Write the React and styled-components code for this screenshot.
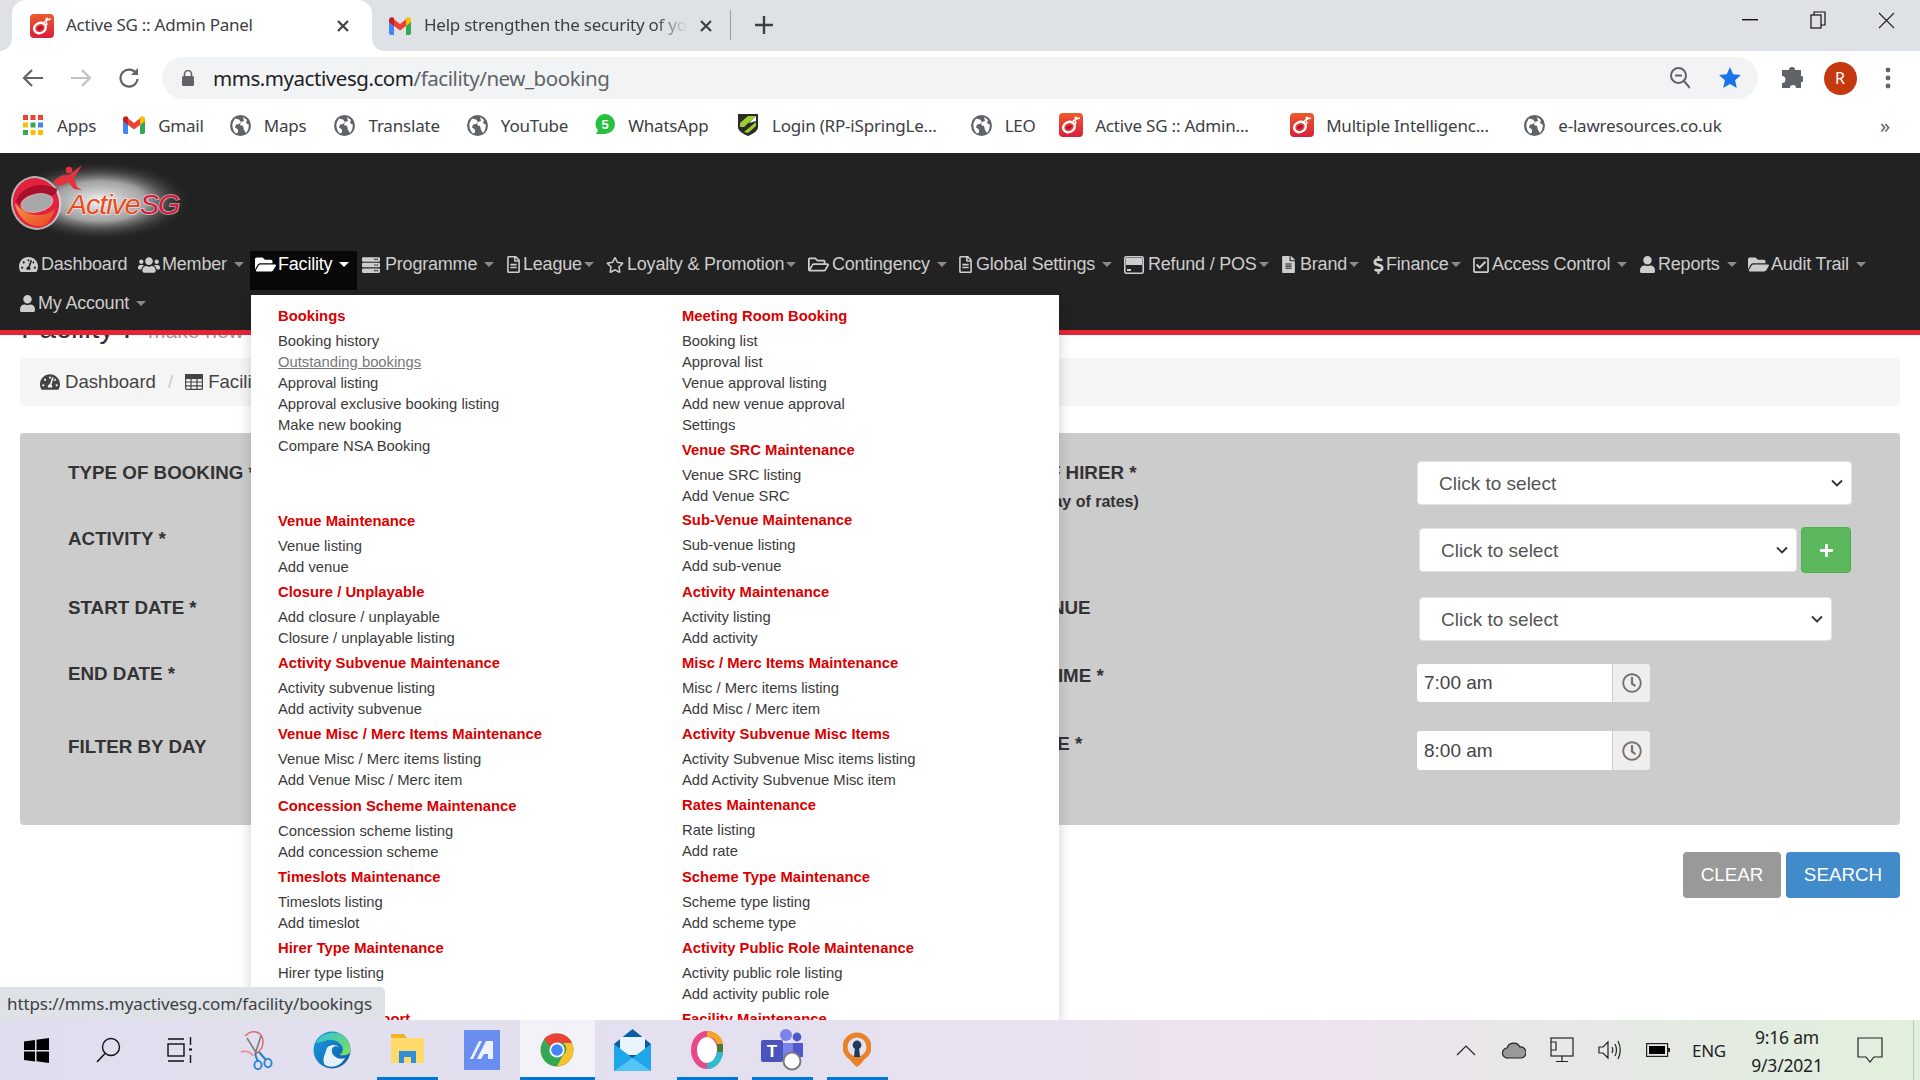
import React from "react";
import styled, { createGlobalStyle } from "styled-components";
import {
  FaTachometerAlt, FaUsers, FaFolderOpen, FaServer, FaRegFileAlt, FaRegStar, FaRegFolderOpen,
  FaFileAlt, FaDollarSign, FaRegCheckSquare, FaUser, FaPlus, FaRegClock,
} from "react-icons/fa";

const Global = createGlobalStyle`
  html, body { margin: 0; height: 100%; overflow: hidden; background: #fff; }
  * { box-sizing: border-box; }
  body { font-family: "Liberation Sans", Arial, sans-serif; color: #333; }
`;

const uiFont = `"Noto Sans", "Open Sans", sans-serif`;
const chevron = `url("data:image/svg+xml,%3Csvg xmlns='http://www.w3.org/2000/svg' width='12' height='8' viewBox='0 0 12 8'%3E%3Cpath d='M1 1.5l5 5 5-5' fill='none' stroke='%23333' stroke-width='1.8'/%3E%3C/svg%3E")`;

const Screen = styled.div`
  width: 1920px; height: 1080px; display: flex; flex-direction: column; overflow: hidden;
`;

/* ---------- browser tabs ---------- */
const TabStrip = styled.div`
  height: 51px; flex: none; background: #dee1e6; display: flex; align-items: stretch; padding-left: 12px;
  font-family: ${uiFont}; font-size: 17px; letter-spacing: -0.25px; color: #3c4043;
`;
const Tab = styled.div`
  width: ${(p) => p.$w}px; display: flex; align-items: center; position: relative;
  padding-left: ${(p) => p.$pad}px; background: ${(p) => (p.$active ? "#fff" : "transparent")};
  border-radius: 14px 14px 0 0;
  ${(p) => p.$active && `
    &::before, &::after { content: ""; position: absolute; bottom: 0; width: 12px; height: 12px; }
    &::before { left: -12px; background: radial-gradient(circle at 0 0, #dee1e6 11.5px, #fff 12px); }
    &::after { right: -12px; background: radial-gradient(circle at 100% 0, #dee1e6 11.5px, #fff 12px); }
  `}
`;
const TabTitle = styled.span`
  margin-left: ${(p) => p.$gap}px; width: ${(p) => p.$w}px; white-space: nowrap; overflow: hidden; padding-bottom: 3px;
  ${(p) => p.$fade && "mask-image: linear-gradient(90deg, #000 88%, transparent 100%);"}
`;
const TabClose = styled.span`
  display: flex; margin-left: ${(p) => p.$left || 0}px;
`;
const TabDivider = styled.i`
  width: 1px; height: 30px; background: #9aa0a6; align-self: center; margin-bottom: 2px;
`;
const NewTab = styled.span`
  display: flex; align-self: center; margin: 0 0 2px 23px;
`;
const WindowControls = styled.div`
  margin-left: auto; display: flex; align-items: flex-start;
`;
const WindowButton = styled.span`
  width: 68px; height: 40px; display: flex; align-items: center; justify-content: center;
`;

/* ---------- toolbar ---------- */
const Toolbar = styled.div`
  height: 54px; flex: none; background: #fff; display: flex; align-items: center; padding: 0 8px 0 9px;
`;
const ToolSlot = styled.span`
  width: 48px; height: 42px; display: flex; align-items: center; justify-content: center; flex: none;
`;
const AddressBar = styled.div`
  width: 1596px; height: 42px; margin: 0 10px 0 9px; border-radius: 21px; background: #f1f3f4; flex: none;
  display: flex; align-items: center; padding: 0 17px 0 20px;
  font-family: ${uiFont}; font-size: 20.5px; letter-spacing: -0.45px;
`;
const Url = styled.span`
  margin-left: 19px; color: #202124;
  & > em { font-style: normal; color: #5f6368; }
`;
const AddressEnd = styled.span`
  margin-left: auto; display: flex; align-items: center; gap: 29px;
`;
const Avatar = styled.span`
  width: 33px; height: 33px; border-radius: 50%; background: #c5390f; color: #fff;
  display: flex; align-items: center; justify-content: center; font: 16px ${uiFont};
`;

/* ---------- bookmarks ---------- */
const Bookmarks = styled.div`
  height: 48px; flex: none; background: #fff; display: flex; align-items: center; padding: 0 30px 8px 23px;
  font-family: ${uiFont}; font-size: 17px; letter-spacing: -0.2px; color: #3c4043;
`;
const Bookmark = styled.span`
  display: flex; align-items: center; gap: ${(p) => p.$gap || 13}px; margin-right: ${(p) => p.$after || 27}px; white-space: nowrap;
`;
const More = styled.span`
  margin-left: auto; font-size: 20px; color: #5f6368;
`;

/* ---------- page ---------- */
const Viewport = styled.div`
  flex: 1; min-height: 0; position: relative; overflow: hidden; background: #fff;
`;
const NavBar = styled.header`
  position: relative; z-index: 2; height: 182px; background: #222; border-bottom: 5px solid #e52535;
`;
const LogoRow = styled.div`
  height: 98px; padding-top: 6px;
`;
const NavList = styled.nav`
  display: flex; flex-wrap: wrap; padding-left: 14px; font-size: 18px; letter-spacing: -0.2px;
`;
const NavItem = styled.div`
  width: ${(p) => p.$w}px; height: 39px; display: flex; align-items: flex-start; padding: 1px 0 0 5px; position: relative;
  color: ${(p) => (p.$open ? "#fff" : "#cdcdcd")}; background: ${(p) => (p.$open ? "#080808" : "transparent")};
  line-height: 25px; white-space: nowrap;
`;
const NavIcon = styled.span`
  width: ${(p) => p.$w}px; height: 25px; flex: none; display: flex; align-items: center;
`;
const Caret = styled.i`
  width: 0; height: 0; margin: 10px 0 0 ${(p) => (p.$tight ? 2 : 7)}px; flex: none;
  border-left: 5px solid transparent; border-right: 5px solid transparent;
  border-top: 5px solid ${(p) => (p.$light ? "#fff" : "#8a8a8a")};
`;
const DropMenu = styled.div`
  position: absolute; left: 1px; top: 44px; width: 808px; height: 740px; background: #fff; overflow: hidden;
  box-shadow: 0 6px 12px rgba(0, 0, 0, 0.18); padding: 11px 0 0 27px; display: grid; grid-template-columns: 404px 1fr;
  font-size: 14.8px; letter-spacing: 0; line-height: 21px; color: #3a3a3a; white-space: normal; cursor: default;
`;
const MenuColumn = styled.div``;
const MenuBlock = styled.section`
  margin-bottom: ${(p) => p.$after || 4.25}px;
`;
const MenuHeading = styled.h4`
  margin: 0 0 4px; font-size: 14.8px; line-height: 21px; font-weight: 700; color: #d90000; white-space: nowrap;
`;
const MenuLink = styled.div`
  color: ${(p) => (p.$hover ? "#777" : "inherit")}; text-decoration: ${(p) => (p.$hover ? "underline" : "none")}; white-space: nowrap;
`;

const Content = styled.main`
  padding: 0 20px;
`;
const PageTitle = styled.h1`
  margin: -25px 0 12px 1px; height: 36px; font-size: 30px; line-height: 36px; font-weight: 400; color: #333; white-space: nowrap;
  & > small { font-size: 21px; color: #999; margin-left: 17px; }
`;
const Breadcrumb = styled.div`
  height: 48px; background: #f5f5f5; border-radius: 4px; display: flex; align-items: center; padding-left: 20px;
  font-size: 18.6px; color: #444;
  & svg { margin-right: 5px; }
`;
const Crumb = styled.span`
  display: flex; align-items: center;
`;
const CrumbSep = styled.span`
  color: #ccc; margin: 0 12px 0 12px;
`;
const FormPanel = styled.form`
  margin-top: 27px; height: 392px; background: #ccc; border-radius: 4px;
  display: grid; grid-template-columns: 960px 437px 1fr; padding-top: 28px;
`;
const LabelColumn = styled.div`
  padding-left: ${(p) => p.$left || 0}px;
`;
const FieldLabel = styled.label`
  display: block; height: 24px; line-height: 24px; font-size: 18.8px; font-weight: 700; color: #333; white-space: nowrap;
  margin-top: ${(p) => p.$top || 0}px;
`;
const FieldHint = styled.div`
  font-size: 16px; line-height: 20px; font-weight: 700; color: #333; margin: 7px 0 0 5px; white-space: nowrap;
`;
const ControlColumn = styled.div`
  display: flex; flex-direction: column; align-items: flex-start;
`;
const ControlRow = styled.div`
  display: flex; align-items: center; gap: 4px; margin: ${(p) => p.$top || 0}px 0 0 ${(p) => p.$left || 0}px;
`;
const Select = styled.select`
  appearance: none; width: ${(p) => p.$w}px; height: 44px; border: 1px solid #e2e2e2; border-radius: 4px;
  background: #fff ${chevron} no-repeat right 8px center;
  padding: 0 21px; font: 19px "Liberation Sans", Arial, sans-serif; color: #555; outline: none;
`;
const AddButton = styled.button`
  width: 50px; height: 46px; background: #5cb85c; border: 1px solid #4cae4c; border-radius: 4px; color: #fff;
  display: flex; align-items: center; justify-content: center; padding: 0;
`;
const TimeGroup = styled.div`
  width: 233px; height: ${(p) => p.$h}px; display: flex; border-radius: 4px; overflow: hidden; background: #fff;
`;
const TimeInput = styled.input`
  width: 195px; border: 0; padding: 0 7px; font: 19px "Liberation Sans", Arial, sans-serif; color: #444; outline: none; background: #fff;
`;
const TimeAddon = styled.span`
  width: 38px; background: #eee; border-left: 1px solid #ccc; display: flex; align-items: center; justify-content: center; color: #7a706c;
`;
const Actions = styled.div`
  display: flex; justify-content: flex-end; gap: 5px; margin-top: 27px;
`;
const ActionButton = styled.button`
  width: ${(p) => p.$w}px; height: 46px; background: ${(p) => p.$bg}; color: #fff; border: 0; border-radius: 4px;
  font: 18.8px "Liberation Sans", Arial, sans-serif; padding: 0;
`;
const StatusTip = styled.div`
  position: absolute; z-index: 3; left: 0; bottom: 0; width: 385px; height: 33px; background: #dee1e6; border-radius: 0 5px 0 0;
  font-family: ${uiFont}; font-size: 17px; letter-spacing: -0.1px; line-height: 33px; padding-left: 7px; color: #3c4043; white-space: nowrap;
`;

/* ---------- taskbar ---------- */
const Taskbar = styled.footer`
  height: 60px; flex: none; display: flex; align-items: stretch; position: relative;
  background: linear-gradient(90deg, #e0deee 0%, #e4e0ef 40%, #eee2f0 68%, #e5e9e4 85%, #e1f0dc 100%);
  &::after { content: ""; position: absolute; right: 6px; top: 0; bottom: 0; width: 1px; background: #b9c9b2; }
`;
const TaskSlot = styled.span`
  width: ${(p) => p.$w || 75}px; display: flex; align-items: center; justify-content: center; position: relative; flex: none;
  background: ${(p) => (p.$active ? "#f3f2f9" : "transparent")};
  ${(p) => p.$running && `&::after { content: ""; position: absolute; bottom: 0; height: 3px; background: #0078d4; left: ${p.$active ? 0 : 7}px; right: ${p.$active ? 0 : 7}px; }`}
`;
const AppArea = styled.div`
  display: flex; margin-left: 3.5px;
`;
const Tray = styled.div`
  margin-left: auto; display: flex; padding-right: 18px; font-family: ${uiFont}; color: #222;
`;
const TraySlot = styled.span`
  width: ${(p) => p.$w || 48}px; display: flex; align-items: center; justify-content: center; font-size: 17px; letter-spacing: -0.3px;
`;
const Clock = styled.div`
  width: 102px; text-align: center; font-size: 17.5px; letter-spacing: -0.2px; line-height: 28px; padding-top: 3px;
`;

/* ---------- drawings ---------- */
const Glyph = ({ w = 24, h = 24, box, children }) => (
  <svg width={w} height={h} viewBox={box || `0 0 ${w} ${h}`} style={{ flex: "none" }}>{children}</svg>
);
const Active = () => (
  <Glyph w={24} h={24}>
    <defs><linearGradient id="af" x1="0" y1="0" x2="0" y2="1"><stop offset="0" stopColor="#ee5a2b" /><stop offset="1" stopColor="#d8203c" /></linearGradient></defs>
    <rect width="24" height="24" rx="4" fill="url(#af)" />
    <ellipse cx="10" cy="14" rx="6" ry="5" transform="rotate(-25 10 14)" fill="none" stroke="#fff" strokeWidth="2.4" />
    <ellipse cx="10" cy="14" rx="3" ry="1.6" transform="rotate(-25 10 14)" fill="#b51030" />
    <circle cx="17" cy="5" r="1.6" fill="#fff" /><path d="M13 9l4-3 4-1M16 7l1 4" stroke="#fff" strokeWidth="1.4" fill="none" />
  </Glyph>
);
const Gmail = () => (
  <Glyph w={22} h={18} box="0 0 22 18">
    <path d="M0 3v13c0 1 .7 2 2 2h3V8z" fill="#4285f4" /><path d="M22 3v13c0 1-.7 2-2 2h-3V8z" fill="#34a853" />
    <path d="M5 9V2.2L11 7l6-4.8V9l-6 4.5z" fill="#ea4335" /><path d="M0 3c0-2.5 2.8-3.6 5-2v8L0 5z" fill="#c5221f" /><path d="M22 3c0-2.5-2.8-3.6-5-2v8l5-4z" fill="#fbbc04" />
  </Glyph>
);
const Globe = () => (
  <Glyph w={21} h={21}>
    <circle cx="10.5" cy="10.5" r="10.5" fill="#5f6368" />
    <path d="M5 3.5l4 1 2 2.5-2 2-3 .5-1 3 3 2v3l-2 1C3 16 1.5 11 3 7zM13 2l4 3-1 3 3 2-1 5-2 3-2-3-1-4-3-1 1-3 3-1z" fill="#fff" />
  </Glyph>
);
const Apps = () => (
  <Glyph w={20} h={20}>
    {["#ea4335", "#ea4335", "#ea4335", "#fbbc04", "#34a853", "#4285f4", "#34a853", "#fbbc04", "#fbbc04"].map((c, i) => (
      <rect key={i} x={(i % 3) * 7.5} y={Math.floor(i / 3) * 7.5} width="5" height="5" fill={c} />
    ))}
  </Glyph>
);
const WhatsApp = () => (
  <Glyph w={20} h={22}>
    <path d="M10 0a10 10 0 0 1 0 20H1l2-3.5A10 10 0 0 1 10 0z" fill="#25c13f" />
    <text x="10" y="15" textAnchor="middle" fontSize="13" fontWeight="700" fontFamily="Liberation Sans" fill="#fff">5</text>
  </Glyph>
);
const Shield = () => (
  <Glyph w={24} h={24}>
    <path d="M2 1h20v13c0 4-5 7-10 9C7 21 2 18 2 14z" fill="#2a2a2a" />
    <path d="M4 10l8-7h8L8 14H4zM8 19l12-10v4l-8 7z" fill="#9bd02b" /><path d="M13 10l7-7v5z" fill="#fff" />
  </Glyph>
);
const Logo = () => (
  <svg width="190" height="84" viewBox="0 0 190 84">
    <defs>
      <radialGradient id="glow"><stop offset="0" stopColor="#f4f4f4" /><stop offset=".5" stopColor="#b8b8b8" stopOpacity=".85" /><stop offset="1" stopColor="#222" stopOpacity="0" /></radialGradient>
      <linearGradient id="ringO" x1="0" y1="0" x2="1" y2="1"><stop offset="0" stopColor="#f79a4c" /><stop offset="1" stopColor="#e8421f" /></linearGradient>
    </defs>
    <ellipse cx="100" cy="42" rx="92" ry="40" fill="url(#glow)" />
    <ellipse cx="36" cy="44" rx="25" ry="27" transform="rotate(-15 36 44)" fill="#e6e6e6" opacity=".75" />
    <ellipse cx="36" cy="44" rx="23" ry="25" transform="rotate(-15 36 44)" fill="#e4213f" />
    <path d="M16 42C21 28 40 21 57 30c0 8-6 7-17 6-10-1-18 2-21 10z" fill="#a8102c" />
    <path d="M15 44c2 14 14 25 27 23 6-1 10-8 13-17-6 6-18 8-27 4-6-3-10-6-13-10z" fill="url(#ringO)" />
    <ellipse cx="37" cy="44" rx="16" ry="9" transform="rotate(-12 37 44)" fill="#a8a8a8" stroke="#e8e8e8" strokeOpacity=".5" />
    <circle cx="69" cy="11" r="3.2" fill="#e4333f" />
    <path d="M53 24c4-6 10-9 16-8l13-10-8 13 3 9 5 3-8-1-6-7-5 3c-3 1-7 0-10-2z" fill="#e4333f" />
    <g fontFamily="Liberation Sans" fontStyle="italic" fontSize="28.5" letterSpacing="-1" stroke="#fff" strokeOpacity=".6" strokeWidth="1.6" paintOrder="stroke">
      <text x="68" y="55" fill="#ec4a1e">Active</text>
      <text x="140" y="55" fill="#df163c">SG</text>
    </g>
  </svg>
);
const TableIcon = () => (
  <svg width="18" height="16" viewBox="0 0 18 16" fill="none" stroke="#444" strokeWidth="1.2">
    <rect x=".6" y=".6" width="16.8" height="14.8" rx="1" /><path d="M.6 4.5h16.8M.6 8h16.8M.6 11.8h16.8M6 4.5v11M12 4.5v11" />
    <rect x=".6" y=".6" width="16.8" height="3.9" fill="#444" />
  </svg>
);
const CardIcon = () => (
  <svg width="20" height="18" viewBox="0 0 20 18"><rect x=".8" y=".8" width="18.4" height="16.4" rx="1.5" fill="none" stroke="#cdcdcd" strokeWidth="1.6" /><rect x="2" y="2" width="16" height="7" fill="#cdcdcd" /><rect x="3" y="13" width="4" height="2" fill="#cdcdcd" /></svg>
);

const Chrome = () => (
  <svg width="34" height="34" viewBox="0 0 34 34">
    <circle cx="17" cy="17" r="16.5" fill="#34a853" />
    <path d="M17 .5A16.5 16.5 0 0 1 32 10H17a7 7 0 0 0-6.5 4L4 6A16.5 16.5 0 0 1 17 .5z" fill="#ea4335" />
    <path d="M32 10a16.5 16.5 0 0 1-15 23.5L23 22a7 7 0 0 0 0-12z" fill="#fbc02d" />
    <circle cx="17" cy="17" r="7.6" fill="#fff" /><circle cx="17" cy="17" r="5.8" fill="#4285f4" />
  </svg>
);
const TaskIcons = {
  Start: () => (<svg width="25" height="25" viewBox="0 0 25 25"><path d="M0 3.5L11 2v10H0zM12.5 1.8L25 0v12H12.5zM0 13.5h11v10L0 22zM12.5 13.5H25V25l-12.5-1.8z" fill="#000" /></svg>),
  Search: () => (<svg width="26" height="26" viewBox="0 0 26 26"><circle cx="16" cy="10" r="8.5" fill="none" stroke="#111" strokeWidth="1.4" /><path d="M10 16.5L2 25" stroke="#111" strokeWidth="1.6" /></svg>),
  Views: () => (<svg width="26" height="26" viewBox="0 0 26 26" fill="none" stroke="#111" strokeWidth="1.4"><path d="M1 2h16M1 24h16M23.5 0v8M23.5 18v8" /><rect x="1" y="7" width="16" height="12" /><path d="M22 12.5h3" strokeWidth="2" /></svg>),
  Snip: () => (<svg width="36" height="40" viewBox="0 0 36 40" fill="none"><path d="M6 6c8-8 18-4 18 6 0 6-4 10-8 12" stroke="#e06a6a" strokeWidth="1.5" /><path d="M8 8l10 16M22 6l-6 18" stroke="#7a7a7a" strokeWidth="1.6" /><path d="M2 22c4-2 10 0 12 4" stroke="#e88" strokeWidth="1.5" /><path d="M16 24l3 8M20 22l7 8" stroke="#2d7fc1" strokeWidth="2" /><ellipse cx="19" cy="35" rx="3.6" ry="4.2" stroke="#2d88d1" strokeWidth="2" /><ellipse cx="29" cy="33" rx="3.6" ry="4.2" stroke="#2d88d1" strokeWidth="2" /></svg>),
  Edge: () => (<svg width="38" height="38" viewBox="0 0 38 38"><defs><linearGradient id="eg" x1="0" y1="0" x2="1" y2="1"><stop offset="0" stopColor="#1b9de2" /><stop offset="1" stopColor="#0c59a4" /></linearGradient><linearGradient id="eg2" x1="0" y1="0" x2="1" y2="1"><stop offset="0" stopColor="#34c1d8" /><stop offset="1" stopColor="#7fe05a" /></linearGradient></defs><circle cx="19" cy="19" r="18.5" fill="url(#eg)" /><path d="M3 12C7 3 17 0 25 2c8 3 13 10 12.5 18-1 4-6 5-11 4 3-2 4-5 3-8-3-6-11-9-18-6-3 1-6 1-8 2z" fill="url(#eg2)" /><path d="M13 20c0-6 9-8 13-4-5-2-8 1-7 5 1 5 7 8 13 6-4 8-13 11-20 7-3-4-1-9 1-14z" fill="#e4f0fb" /></svg>),
  Folder: () => (<svg width="33" height="34" viewBox="0 0 33 34"><path d="M0 1h13l3 4h17v25H0z" fill="#f0b429" /><path d="M0 5h33v25H0z" fill="#ffd969" /><path d="M8 30V18h17v12z" fill="#2f8fd6" /><path d="M13 30v-6h7v6z" fill="#ffd969" /></svg>),
  Slash: () => (<svg width="36" height="40" viewBox="0 0 36 40"><rect width="36" height="40" fill="#6a8df0" /><path d="M6 29l9-18h3L9 29zM13 29l9-18h7v18h-5v-5h-4l-3 5z" fill="#eef2ff" /></svg>),
  Mail: () => (<svg width="37" height="42" viewBox="0 0 37 42"><path d="M0 15L18.5 0 37 15v27H0z" fill="#0a5ca8" /><path d="M6 8h25v18H6z" fill="#e9f4fc" /><path d="M0 15l18.5 14L37 15v27H0z" fill="#1fa5ea" /><path d="M0 42l18.5-13L37 42z" fill="#52c4f5" /></svg>),
  Ring: () => (<svg width="32" height="40" viewBox="0 0 32 40"><ellipse cx="16" cy="20" rx="13" ry="16" fill="#fff" stroke="#e8488b" strokeWidth="6" /><path d="M16 4c7 0 12 4 13 10" stroke="#f4a62a" strokeWidth="6" fill="none" /><path d="M29 22c-1 8-6 14-13 14" stroke="#2dbbd0" strokeWidth="6" fill="none" /><path d="M29 14v8" stroke="#4a7a3a" strokeWidth="6" /></svg>),
  Teams: () => (<svg width="42" height="44" viewBox="0 0 42 44"><circle cx="25" cy="7" r="6" fill="#7b83eb" /><circle cx="36" cy="9" r="4.4" fill="#5059c9" /><path d="M14 15h20v18H14z" fill="#7b83eb" /><path d="M32 15h10v14H32z" fill="#5059c9" /><rect x="0" y="12" width="22" height="22" rx="2" fill="#4b53bc" /><text x="11" y="29" textAnchor="middle" fontFamily="Liberation Sans" fontWeight="700" fontSize="17" fill="#fff">T</text><circle cx="31" cy="33" r="8.5" fill="#fff" stroke="#7a7a7a" strokeWidth="2" /></svg>),
  Vpn: () => (<svg width="28" height="36" viewBox="0 0 28 36"><circle cx="14" cy="15" r="12" fill="none" stroke="#e8832a" strokeWidth="5" /><path d="M6 26c2 4 5 7 8 9 3-2 6-5 8-9" fill="#e8832a" /><circle cx="14" cy="13" r="4.4" fill="#203a5c" /><path d="M12 15h4l1 10h-6z" fill="#203a5c" /></svg>),
};

const navItems = [
  { icon: <FaTachometerAlt size={19} />, iw: 22, label: "Dashboard", w: 119, noCaret: true },
  { icon: <FaUsers size={22} />, iw: 24, label: "Member", w: 117 },
  { icon: <FaFolderOpen size={21} />, iw: 23, label: "Facility", w: 107, open: true },
  { icon: <FaServer size={18} />, iw: 23, label: "Programme", w: 143 },
  { icon: <FaRegFileAlt size={17} />, iw: 18, label: "League", w: 101, tight: true },
  { icon: <FaRegStar size={18} />, iw: 21, label: "Loyalty & Promotion", w: 202, tight: true },
  { icon: <FaRegFolderOpen size={21} />, iw: 24, label: "Contingency", w: 149 },
  { icon: <FaRegFileAlt size={17} />, iw: 19, label: "Global Settings", w: 167 },
  { icon: <CardIcon />, iw: 24, label: "Refund / POS", w: 156, tight: true },
  { icon: <FaFileAlt size={17} />, iw: 20, label: "Brand", w: 91, tight: true },
  { icon: <FaDollarSign size={18} />, iw: 15, label: "Finance", w: 101, tight: true },
  { icon: <FaRegCheckSquare size={18} />, iw: 20, label: "Access Control", w: 167 },
  { icon: <FaUser size={17} />, iw: 19, label: "Reports", w: 109 },
  { icon: <FaFolderOpen size={21} />, iw: 23, label: "Audit Trail", w: 140 },
  { icon: <FaUser size={17} />, iw: 19, label: "My Account", w: 140 },
];

const leftMenu = [
  { t: "Bookings", after: 53.5, l: ["Booking history", "Outstanding bookings", "Approval listing", "Approval exclusive booking listing", "Make new booking", "Compare NSA Booking"] },
  { t: "Venue Maintenance", l: ["Venue listing", "Add venue"] },
  { t: "Closure / Unplayable", l: ["Add closure / unplayable", "Closure / unplayable listing"] },
  { t: "Activity Subvenue Maintenance", l: ["Activity subvenue listing", "Add activity subvenue"] },
  { t: "Venue Misc / Merc Items Maintenance", l: ["Venue Misc / Merc items listing", "Add Venue Misc / Merc item"] },
  { t: "Concession Scheme Maintenance", l: ["Concession scheme listing", "Add concession scheme"] },
  { t: "Timeslots Maintenance", l: ["Timeslots listing", "Add timeslot"] },
  { t: "Hirer Type Maintenance", l: ["Hirer type listing", "Add hirer type"] },
  { t: "Hirer Types Report", l: [] },
];
const rightMenu = [
  { t: "Meeting Room Booking", l: ["Booking list", "Approval list", "Venue approval listing", "Add new venue approval", "Settings"] },
  { t: "Venue SRC Maintenance", after: 3, l: ["Venue SRC listing", "Add Venue SRC"] },
  { t: "Sub-Venue Maintenance", l: ["Sub-venue listing", "Add sub-venue"] },
  { t: "Activity Maintenance", l: ["Activity listing", "Add activity"] },
  { t: "Misc / Merc Items Maintenance", l: ["Misc / Merc items listing", "Add Misc / Merc item"] },
  { t: "Activity Subvenue Misc Items", l: ["Activity Subvenue Misc items listing", "Add Activity Subvenue Misc item"] },
  { t: "Rates Maintenance", l: ["Rate listing", "Add rate"] },
  { t: "Scheme Type Maintenance", l: ["Scheme type listing", "Add scheme type"] },
  { t: "Activity Public Role Maintenance", l: ["Activity public role listing", "Add activity public role"] },
  { t: "Facility Maintenance", l: [] },
];

const MenuCol = ({ blocks }) => (
  <MenuColumn>
    {blocks.map((b) => (
      <MenuBlock key={b.t} $after={b.after}>
        <MenuHeading>{b.t}</MenuHeading>
        {b.l.map((x) => <MenuLink key={x} $hover={x === "Outstanding bookings"}>{x}</MenuLink>)}
      </MenuBlock>
    ))}
  </MenuColumn>
);

const Close = () => (
  <svg width="14" height="14" viewBox="0 0 14 14"><path d="M2 2l10 10M12 2L2 12" stroke="#3c4043" strokeWidth="2.2" /></svg>
);

export default function App() {
  return (
    <Screen>
      <Global />
      <TabStrip>
        <Tab $active $w={360} $pad={18}>
          <Active /><TabTitle $gap={12} $w={270}>Active SG :: Admin Panel</TabTitle><TabClose><Close /></TabClose>
        </Tab>
        <Tab $w={358} $pad={17}>
          <Gmail /><TabTitle $gap={13} $w={263} $fade>Help strengthen the security of your account</TabTitle><TabClose $left={12}><Close /></TabClose>
        </Tab>
        <TabDivider />
        <NewTab><svg width="20" height="20" viewBox="0 0 20 20"><path d="M10 1v18M1 10h18" stroke="#3c4043" strokeWidth="2.4" /></svg></NewTab>
        <WindowControls>
          <WindowButton><svg width="16" height="2"><rect width="16" height="1.4" fill="#111" /></svg></WindowButton>
          <WindowButton><svg width="16" height="18" viewBox="0 0 16 18" fill="none" stroke="#111" strokeWidth="1.2"><rect x="1" y="4" width="10" height="13" /><path d="M4 4V1h11v13h-4" /></svg></WindowButton>
          <WindowButton><svg width="17" height="17" viewBox="0 0 17 17"><path d="M1 1l15 15M16 1L1 16" stroke="#222" strokeWidth="1.1" /></svg></WindowButton>
        </WindowControls>
      </TabStrip>

      <Toolbar>
        <ToolSlot><svg width="22" height="20" viewBox="0 0 22 20" fill="none" stroke="#5f6368" strokeWidth="2.2"><path d="M21 10H3M10 2l-8 8 8 8" /></svg></ToolSlot>
        <ToolSlot><svg width="22" height="20" viewBox="0 0 22 20" fill="none" stroke="#bdc1c6" strokeWidth="2.2"><path d="M1 10h18M12 2l8 8-8 8" /></svg></ToolSlot>
        <ToolSlot><svg width="22" height="22" viewBox="0 0 22 22" fill="none" stroke="#5f6368" strokeWidth="2.2"><path d="M18.5 7A8.5 8.5 0 1 0 19.5 12" /><path d="M20 1v7h-7" fill="#5f6368" stroke="none" /></svg></ToolSlot>
        <AddressBar>
          <svg width="12" height="16" viewBox="0 0 12 16"><path d="M2.5 6V4a3.5 3.5 0 0 1 7 0v2" fill="none" stroke="#5f6368" strokeWidth="1.6" /><rect y="6" width="12" height="10" rx="1.5" fill="#5f6368" /></svg>
          <Url>mms.myactivesg.com<em>/facility/new_booking</em></Url>
          <AddressEnd>
            <svg width="20" height="22" viewBox="0 0 20 22" fill="none" stroke="#5f6368" strokeWidth="2"><circle cx="8.5" cy="8.5" r="7.5" /><path d="M14 14l6 7M5 8.5h7" /></svg>
            <svg width="22" height="22" viewBox="0 0 22 22"><path d="M11 0l3.2 7.3 7.8.7-5.9 5.2L17.8 21 11 16.9 4.2 21l1.7-7.8L0 8l7.8-.7z" fill="#1a73e8" /></svg>
          </AddressEnd>
        </AddressBar>
        <ToolSlot><svg width="22" height="22" viewBox="0 0 22 22"><path d="M8 3a3 3 0 0 1 6 0h6v6a3 3 0 0 1 0 6v6h-5a3 3 0 0 0-6 0H1v-5a3 3 0 0 0 0-7V3z" fill="#5f6368" /></svg></ToolSlot>
        <ToolSlot><Avatar>R</Avatar></ToolSlot>
        <ToolSlot><svg width="6" height="22" viewBox="0 0 6 22" fill="#5f6368"><circle cx="3" cy="3" r="2.4" /><circle cx="3" cy="11" r="2.4" /><circle cx="3" cy="19" r="2.4" /></svg></ToolSlot>
      </Toolbar>

      <Bookmarks>
        <Bookmark $gap={14}><Apps />Apps</Bookmark>
        <Bookmark $after={26}><Gmail />Gmail</Bookmark>
        <Bookmark $after={28}><Globe />Maps</Bookmark>
        <Bookmark $after={27}><Globe />Translate</Bookmark>
        <Bookmark><Globe />YouTube</Bookmark>
        <Bookmark $after={27.5}><WhatsApp />WhatsApp</Bookmark>
        <Bookmark $gap={12} $after={34}><Shield />Login (RP-iSpringLe...</Bookmark>
        <Bookmark $after={23.5}><Globe />LEO</Bookmark>
        <Bookmark $gap={12} $after={41.5}><Active />Active SG :: Admin...</Bookmark>
        <Bookmark $gap={12} $after={35.5}><Active />Multiple Intelligenc...</Bookmark>
        <Bookmark><Globe />e-lawresources.co.uk</Bookmark>
        <More>»</More>
      </Bookmarks>

      <Viewport>
        <NavBar>
          <LogoRow><Logo /></LogoRow>
          <NavList>
            {navItems.map((n) => (
              <NavItem key={n.label} $w={n.w} $open={n.open}>
                <NavIcon $w={n.iw}>{n.icon}</NavIcon>
                {n.label}
                {!n.noCaret && <Caret $tight={n.tight} $light={n.open} />}
                {n.open && (
                  <DropMenu>
                    <MenuCol blocks={leftMenu} />
                    <MenuCol blocks={rightMenu} />
                  </DropMenu>
                )}
              </NavItem>
            ))}
          </NavList>
        </NavBar>

        <Content>
          <PageTitle>Facility :<small>make new booking</small></PageTitle>
          <Breadcrumb>
            <Crumb><FaTachometerAlt size={20} />Dashboard</Crumb>
            <CrumbSep>/</CrumbSep>
            <Crumb><TableIcon />Facility</Crumb>
          </Breadcrumb>
          <FormPanel>
            <LabelColumn $left={48}>
              <FieldLabel>TYPE OF BOOKING *</FieldLabel>
              <FieldLabel $top={42}>ACTIVITY *</FieldLabel>
              <FieldLabel $top={45}>START DATE *</FieldLabel>
              <FieldLabel $top={42}>END DATE *</FieldLabel>
              <FieldLabel $top={49}>FILTER BY DAY</FieldLabel>
            </LabelColumn>
            <LabelColumn>
              <FieldLabel>TYPE OF HIRER *</FieldLabel>
              <FieldHint>(for display of rates)</FieldHint>
              <FieldLabel $top={84}>SUB-VENUE</FieldLabel>
              <FieldLabel $top={44}>START TIME *</FieldLabel>
              <FieldLabel $top={44}>END TIME *</FieldLabel>
            </LabelColumn>
            <ControlColumn>
              <Select $w={435}><option>Click to select</option></Select>
              <ControlRow $top={22} $left={2}>
                <Select $w={378}><option>Click to select</option></Select>
                <AddButton type="button"><FaPlus size={15} /></AddButton>
              </ControlRow>
              <ControlRow $top={24} $left={2}><Select $w={413}><option>Click to select</option></Select></ControlRow>
              <ControlRow $top={23}>
                <TimeGroup $h={38}><TimeInput defaultValue="7:00 am" /><TimeAddon><FaRegClock size={20} /></TimeAddon></TimeGroup>
              </ControlRow>
              <ControlRow $top={29}>
                <TimeGroup $h={39}><TimeInput defaultValue="8:00 am" /><TimeAddon><FaRegClock size={20} /></TimeAddon></TimeGroup>
              </ControlRow>
            </ControlColumn>
          </FormPanel>
          <Actions>
            <ActionButton type="button" $w={98} $bg="#999">CLEAR</ActionButton>
            <ActionButton type="button" $w={114} $bg="#428bca">SEARCH</ActionButton>
          </Actions>
        </Content>
        <StatusTip>https://mms.myactivesg.com/facility/bookings</StatusTip>
      </Viewport>

      <Taskbar>
        <TaskSlot $w={72}><TaskIcons.Start /></TaskSlot>
        <TaskSlot $w={72}><TaskIcons.Search /></TaskSlot>
        <TaskSlot $w={72}><TaskIcons.Views /></TaskSlot>
        <AppArea>
          <TaskSlot><TaskIcons.Snip /></TaskSlot>
          <TaskSlot><TaskIcons.Edge /></TaskSlot>
          <TaskSlot $running><TaskIcons.Folder /></TaskSlot>
          <TaskSlot><TaskIcons.Slash /></TaskSlot>
          <TaskSlot $running $active><Chrome /></TaskSlot>
          <TaskSlot><TaskIcons.Mail /></TaskSlot>
          <TaskSlot $running><TaskIcons.Ring /></TaskSlot>
          <TaskSlot $running><TaskIcons.Teams /></TaskSlot>
          <TaskSlot $running><TaskIcons.Vpn /></TaskSlot>
        </AppArea>
        <Tray>
          <TraySlot><svg width="20" height="11" viewBox="0 0 20 11" fill="none" stroke="#222" strokeWidth="1.2"><path d="M1 10l9-9 9 9" /></svg></TraySlot>
          <TraySlot><svg width="24" height="18" viewBox="0 0 24 18"><path d="M6 17a5 5 0 0 1-1-10 7 7 0 0 1 13-1 5.5 5.5 0 0 1 1 11z" fill="#999" stroke="#222" strokeWidth="1.2" /></svg></TraySlot>
          <TraySlot><svg width="24" height="26" viewBox="0 0 24 26" fill="none" stroke="#222" strokeWidth="1.2"><rect x="1" y="1" width="22" height="18" /><path d="M1 5h5v8H1M12 19v5M6 24.5h12" /></svg></TraySlot>
          <TraySlot><svg width="24" height="24" viewBox="0 0 24 24" fill="none" stroke="#222" strokeWidth="1.2"><path d="M1 9h4l5-5v16l-5-5H1zM14 9c1 2 1 4 0 6M17 6c2 4 2 8 0 12M20 3c3 6 3 12 0 18" /></svg></TraySlot>
          <TraySlot><svg width="24" height="14" viewBox="0 0 24 14"><rect x=".6" y=".6" width="21" height="12.8" fill="none" stroke="#222" strokeWidth="1.2" /><rect x="3" y="3" width="16" height="8" fill="#000" /><rect x="22" y="5" width="2" height="4" fill="#222" /></svg></TraySlot>
          <TraySlot $w={54}>ENG</TraySlot>
          <Clock>9:16 am<br />9/3/2021</Clock>
          <TraySlot $w={64}><svg width="26" height="26" viewBox="0 0 26 26" fill="none" stroke="#222" strokeWidth="1.2"><path d="M1 1h24v19h-8l-4 5-4-5H1z" /></svg></TraySlot>
        </Tray>
      </Taskbar>
    </Screen>
  );
}
